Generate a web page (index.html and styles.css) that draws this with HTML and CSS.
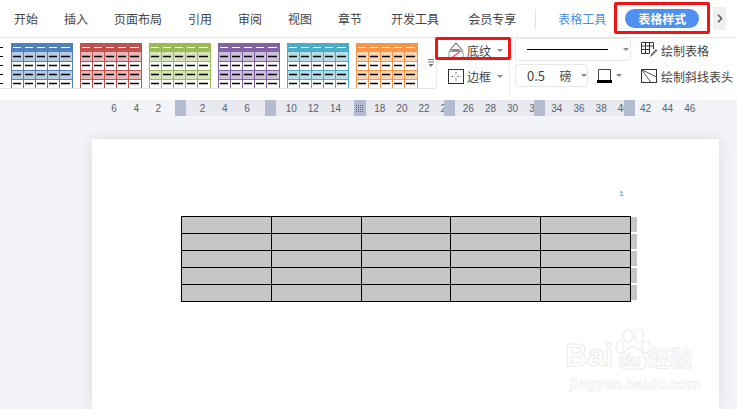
FILE: index.html
```html
<!DOCTYPE html>
<html>
<head>
    <meta charset="UTF-8">
    <title>表格样式</title>
    <link rel="stylesheet" href="styles.css">
</head>
<body>
    <!-- One table style thumbnail, coloured through --c and --b -->
    <svg class="defs" width="0" height="0">
        <symbol id="swatch" viewBox="0 0 62 45">
            <rect width="62" height="45" fill="#fff"/>
            <rect width="62" height="9" fill="var(--c)"/>
            <rect y="9" width="62" height="9" fill="var(--b)"/>
            <rect y="27" width="62" height="9" fill="var(--b)"/>
            <path d="M0 18.5H62M0 27.5H62M0 36.5H62M0.5 0V45M12.5 9V45M24.5 9V45M36.5 9V45M48.5 9V45M61.5 0V45" stroke="var(--c)" fill="none"/>
            <path d="M2 4.5H10M14 4.5H22M26 4.5H34M38 4.5H46M50 4.5H59" stroke="#fff" fill="none"/>
            <path d="M2 13.5H10M14 13.5H22M26 13.5H34M38 13.5H46M50 13.5H59M2 22.5H10M14 22.5H22M26 22.5H34M38 22.5H46M50 22.5H59M2 31.5H10M14 31.5H22M26 31.5H34M38 31.5H46M50 31.5H59M2 40.5H10M14 40.5H22M26 40.5H34M38 40.5H46M50 40.5H59" stroke="#000" stroke-width="1.3" fill="none"/>
        </symbol>
    </svg>

    <!-- Tabs -->
    <div class="tabs">
        <span class="tab">开始</span>
        <span class="tab">插入</span>
        <span class="tab">页面布局</span>
        <span class="tab">引用</span>
        <span class="tab">审阅</span>
        <span class="tab">视图</span>
        <span class="tab tab-wide">章节</span>
        <span class="tab tab-wide">开发工具</span>
        <span class="tab">会员专享</span>
        <span class="tab-divider"></span>
        <span class="tab tab-blue">表格工具</span>
        <span class="tab-pill">表格样式</span>
        <span class="tab-next">
            <svg width="6" height="9" viewBox="0 0 6 9"><path d="M1 .8 4.6 4.5 1 8.2" fill="none" stroke="#555" stroke-width="1.5"/></svg>
        </span>
        <span class="mark mark-tab"></span>
    </div>

    <!-- Ribbon -->
    <div class="ribbon">
        <div class="gallery">
            <svg class="swatch-cut" width="3" height="45" viewBox="0 0 3 45"><path d="M0 4.5H3M0 13.5H3M0 22.5H3M0 31.5H3M0 40.5H3" stroke="#000"/></svg>
            <svg class="swatch sw-blue" width="62" height="45"><use href="#swatch"/></svg>
            <svg class="swatch sw-red" width="62" height="45"><use href="#swatch"/></svg>
            <svg class="swatch sw-green" width="62" height="45"><use href="#swatch"/></svg>
            <svg class="swatch sw-purple" width="62" height="45"><use href="#swatch"/></svg>
            <svg class="swatch sw-teal" width="62" height="45"><use href="#swatch"/></svg>
            <svg class="swatch sw-orange" width="62" height="45"><use href="#swatch"/></svg>
            <svg class="more" width="6" height="8" viewBox="0 0 6 8"><path d="M0 .5H6M0 3H6" stroke="#777"/><path d="M.5 5H5.5L3 8Z" fill="#777"/></svg>
        </div>

        <div class="col-shade">
            <div class="tool">
                <svg class="tool-icon" width="16" height="17" viewBox="0 0 16 17">
                    <path d="M1.5 8.5 8 1 14.5 8.5" fill="#fff" stroke="#444"/>
                    <path d="M4 7 11 7 13 9H3Z" fill="#888"/>
                    <path d="M1 9.5H15V15.5H1Z" fill="#fff" stroke="#999"/>
                    <path d="M4 15.5 11.5 10" stroke="#e55" stroke-width="1.4" fill="none"/>
                </svg>
                <span>底纹</span><i class="caret"></i>
            </div>
            <div class="tool">
                <svg class="tool-icon" width="16" height="15" viewBox="0 0 16 15">
                    <rect x=".5" y=".5" width="15" height="14" fill="none" stroke="#333"/>
                    <path d="M8 3V6M8 9V12M3.500 7.500H6.500M9.500 7.500H12.500" stroke="#555" stroke-dasharray="1.500 1" fill="none"/>
                </svg>
                <span>边框</span><i class="caret"></i>
            </div>
            <span class="mark mark-shade"></span>
        </div>

        <div class="col-pen">
            <div class="select select-line">
                <span class="line-sample"></span><i class="caret"></i>
            </div>
            <div class="pen-row">
                <div class="select select-weight">
                    <span class="weight">0.5</span><span class="unit">磅</span><i class="caret"></i>
                </div>
                <svg class="pen-color" width="15" height="15" viewBox="0 0 15 15">
                    <path d="M1.5 12V1.5H13.5V12" fill="none" stroke="#444"/>
                    <rect y="12" width="15" height="3" fill="#000"/>
                </svg>
                <i class="caret"></i>
            </div>
        </div>

        <div class="col-draw">
            <div class="tool">
                <svg class="tool-icon" width="17" height="16" viewBox="0 0 17 16">
                    <path d="M12.5 7V.5H.5V11.500H8M.5 4H12.500M.5 7.500H9M4.500 .5V11.500M8.500 .5V11.500" fill="none" stroke="#333"/>
                    <path d="M9 15 10 12 15 7 16.500 8.500 11.500 13.500Z" fill="#777"/>
                </svg>
                <span>绘制表格</span>
            </div>
            <div class="tool">
                <svg class="tool-icon" width="17" height="15" viewBox="0 0 17 15">
                    <rect x=".5" y=".5" width="15" height="13" fill="none" stroke="#333"/>
                    <path d="M.5 .5 15.500 8M.5 .5 10 13.500" fill="none" stroke="#555"/>
                </svg>
                <span>绘制斜线表头</span>
            </div>
        </div>
    </div>

    <!-- Ruler -->
    <div class="ruler">
        <span>6</span><span>4</span><span>2</span><span></span>
        <span>2</span><span>4</span><span>6</span><span></span>
        <span>10</span><span>12</span><span>14</span><span></span>
        <span>18</span><span>20</span><span>22</span><span>24</span>
        <span>26</span><span>28</span><span>30</span><span>32</span>
        <span>34</span><span>36</span><span>38</span><span>40</span>
        <span>42</span><span>44</span><span>46</span>
        <b class="stop stop-1"></b>
        <b class="stop stop-2"></b>
        <b class="stop stop-3"></b>
        <b class="stop stop-4"></b>
        <b class="stop stop-5"></b>
        <b class="stop stop-dots"></b>
    </div>

    <!-- Document -->
    <div class="workspace">
        <div class="sheet">
            <div class="page-no">1</div>
            <div class="table-row-wrap">
                <table class="doc-table">
                    <tr><td></td><td></td><td></td><td></td><td></td></tr>
                    <tr><td></td><td></td><td></td><td></td><td></td></tr>
                    <tr><td></td><td></td><td></td><td></td><td></td></tr>
                    <tr><td></td><td></td><td></td><td></td><td></td></tr>
                    <tr><td></td><td></td><td></td><td></td><td></td></tr>
                </table>
                <div class="row-ends">
                    <i></i><i></i><i></i><i></i><i></i>
                </div>
            </div>
            <div class="watermark">
                <div class="wm-logo">
                    <span>Bai</span>
                    <svg width="38" height="44" viewBox="0 0 38 44">
                        <g fill="#fff" stroke="#ececec" stroke-width="1.2">
                            <ellipse cx="7" cy="19" rx="4" ry="6"/>
                            <ellipse cx="15" cy="8" rx="4.500" ry="6.500"/>
                            <ellipse cx="26" cy="8" rx="4.500" ry="6.500"/>
                            <ellipse cx="33" cy="19" rx="4" ry="6"/>
                            <path d="M20 19C27 19 36 31 33 38 30 43 24 41 20 41 16 41 10 43 7 38 4 31 13 19 20 19Z"/>
                        </g>
                    </svg>
                    <span class="wm-cn">经验</span>
                    <span class="wm-du">du</span>
                </div>
                <div class="wm-url">jingyan.baidu.com</div>
            </div>
        </div>
    </div>
</body>
</html>
```

FILE: styles.css
```css
html, body {
    margin: 0;
    height: 409px;
    overflow: hidden;
}
body {
    font-family: "Noto Sans CJK SC", "Liberation Sans", sans-serif;
    font-size: 12px;
    color: #444;
    background-color: #fff;
}
.defs {
    position: absolute;
}
.caret {
    display: block;
    width: 0;
    height: 0;
    border: 3px solid transparent;
    border-top: 3px solid #888;
    border-bottom: 0;
}

/* Tabs */
.tabs {
    position: relative;
    display: flex;
    align-items: center;
    height: 37px;
    padding-left: 14px;
    border-bottom: 1px solid #e6e6e6;
}
.tab {
    margin-right: 26px;
    line-height: 36px;
    white-space: nowrap;
}
.tab-wide {
    margin-right: 29px;
}
.tab-divider {
    width: 1px;
    height: 20px;
    margin: 0 22px 0 -7px;
    background-color: #e4e4e4;
}
.tab-blue {
    margin-right: 19px;
    color: #4a90e8;
}
.tab-pill {
    width: 74px;
    height: 19px;
    line-height: 19px;
    border-radius: 10px;
    text-align: center;
    font-weight: bold;
    color: #fff;
    background-color: #4f8ff0;
}
.tab-next {
    display: flex;
    align-items: center;
    justify-content: center;
    width: 13px;
    height: 23px;
    margin-left: 14px;
    background-color: #f0f0f0;
}
.mark {
    position: absolute;
    border: 3px solid #f01414;
    border-radius: 2px;
    box-sizing: border-box;
}
.mark-tab {
    left: 614px;
    top: 2px;
    width: 96px;
    height: 32px;
}

/* Ribbon */
.ribbon {
    display: flex;
    height: 62px;
}
.ribbon > div {
    flex: none;
}
.gallery {
    display: flex;
    align-items: flex-start;
    gap: 7px;
    width: 436px;
    height: 45px;
    padding-top: 5px;
    border-right: 1px solid #e8e8e8;
    border-bottom: 1px solid #e4e4e4;
    border-bottom-right-radius: 3px;
}
.swatch-cut {
    margin-right: 1px;
}
.more {
    margin: 16px 0 0 3px;
}
.sw-blue { --c: #4f81bd; --b: #b8cce4; }
.sw-red { --c: #c0504d; --b: #e6b8b7; }
.sw-green { --c: #9bbb59; --b: #d8e4bc; }
.sw-purple { --c: #8064a2; --b: #ccc0da; }
.sw-teal { --c: #4bacc6; --b: #b7dde8; }
.sw-orange { --c: #f79646; --b: #fcd5b4; }

.col-shade {
    position: relative;
    width: 73px;
    height: 59px;
    padding-left: 11px;
    border-right: 1px solid #f0f0f0;
    box-sizing: border-box;
}
.col-shade .tool {
    height: 26px;
}
.col-shade .tool:first-child {
    margin-top: -1px;
}
.tool {
    display: flex;
    align-items: center;
    white-space: nowrap;
}
.tool-icon {
    margin-right: 3px;
    flex: none;
}
.tool .caret {
    margin-left: 6px;
}
.mark-shade {
    left: -2px;
    top: -1px;
    width: 76px;
    height: 23px;
}
.col-pen {
    width: 126px;
    margin-left: 5px;
}
.select {
    display: flex;
    align-items: center;
    box-sizing: border-box;
    height: 23px;
    border: 1px solid #e8e8e8;
    border-radius: 3px;
}
.select-line {
    width: 116px;
    padding-left: 11px;
}
.line-sample {
    width: 81px;
    height: 1px;
    background-color: #000;
    margin-right: 15px;
}
.pen-row {
    display: flex;
    align-items: center;
    margin-top: 3px;
}
.select-weight {
    width: 73px;
    padding-left: 11px;
}
.weight {
    width: 33px;
    font-size: 13px;
}
.unit {
    width: 22px;
}
.pen-color {
    margin-left: 9px;
}
.pen-row > .caret {
    margin-left: 4px;
}
.col-draw .tool {
    height: 24px;
}
.col-draw .tool + .tool {
    margin-top: 2px;
}

/* Ruler */
.ruler {
    position: relative;
    z-index: 1;
    display: grid;
    grid-template-columns: repeat(27, 22.15px);
    height: 16px;
    padding-left: 103px;
    align-items: center;
    font-size: 10px;
    font-family: "Liberation Sans", sans-serif;
    color: #5a6070;
    text-align: center;
    background: linear-gradient(to right, #f3f4f7 175px, #e8eaf0 175px, #e8eaf0 635px, #f3f4f7 635px);
}
.stop {
    position: absolute;
    top: 0;
    width: 11px;
    height: 16px;
    background-color: #b6bccf;
}
.stop-1 { left: 175px; }
.stop-2 { left: 265px; }
.stop-3 { left: 444px; }
.stop-4 { left: 534px; }
.stop-5 { left: 624px; }
.stop-dots {
    left: 354px;
    width: 12px;
}
.stop-dots::after {
    content: "";
    position: absolute;
    left: 2px;
    top: 4px;
    width: 8px;
    height: 8px;
    background-image:
        linear-gradient(to right, #5d6272 1px, transparent 1px),
        linear-gradient(#b6bccf 1px, transparent 1px);
    background-size: 2px 2px;
    background-blend-mode: lighten;
}

/* Document */
.workspace {
    height: 293px;
    box-sizing: border-box;
    padding: 23px 18px 0 92px;
    background-color: #f3f4f7;
}
.sheet {
    position: relative;
    height: 270px;
    padding: 49px 0 0 89px;
    box-sizing: border-box;
    background-color: #fff;
    box-shadow: 0 0 14px rgba(0, 0, 0, 0.1);
}
.page-no {
    position: absolute;
    left: 527px;
    top: 50px;
    font-family: "Liberation Mono", monospace;
    font-size: 8px;
    color: #777;
}
.table-row-wrap {
    display: flex;
    margin-top: 28px;
}
.doc-table {
    width: 450px;
    height: 86px;
    border-collapse: collapse;
    table-layout: fixed;
    background-color: #c6c6c6;
}
.doc-table td {
    padding: 0;
    border: 1.5px solid #000;
}
.row-ends {
    display: flex;
    flex-direction: column;
    gap: 2px;
    padding-top: 1px;
}
.row-ends i {
    display: block;
    width: 6px;
    height: 15px;
    background-color: #c6c6c6;
}
.watermark {
    position: absolute;
    left: 473px;
    top: 189px;
    width: 140px;
    text-align: center;
    color: #fff;
    font-family: "Liberation Sans", sans-serif;
}
.wm-logo {
    position: relative;
    display: flex;
    align-items: flex-end;
    font-size: 31px;
    font-weight: bold;
    line-height: 32px;
    -webkit-text-stroke: 1px #ececec;
}
.wm-du {
    position: absolute;
    left: 56px;
    top: 23px;
    font-size: 16px;
    line-height: 20px;
}
.wm-cn {
    margin-left: -3px;
    font-family: "Noto Sans CJK SC", sans-serif;
    font-size: 22px;
    -webkit-text-stroke: .8px #ececec;
}
.wm-url {
    margin-top: 3px;
    font-size: 15px;
    font-weight: bold;
    -webkit-text-stroke: .6px #ececec;
}
```
